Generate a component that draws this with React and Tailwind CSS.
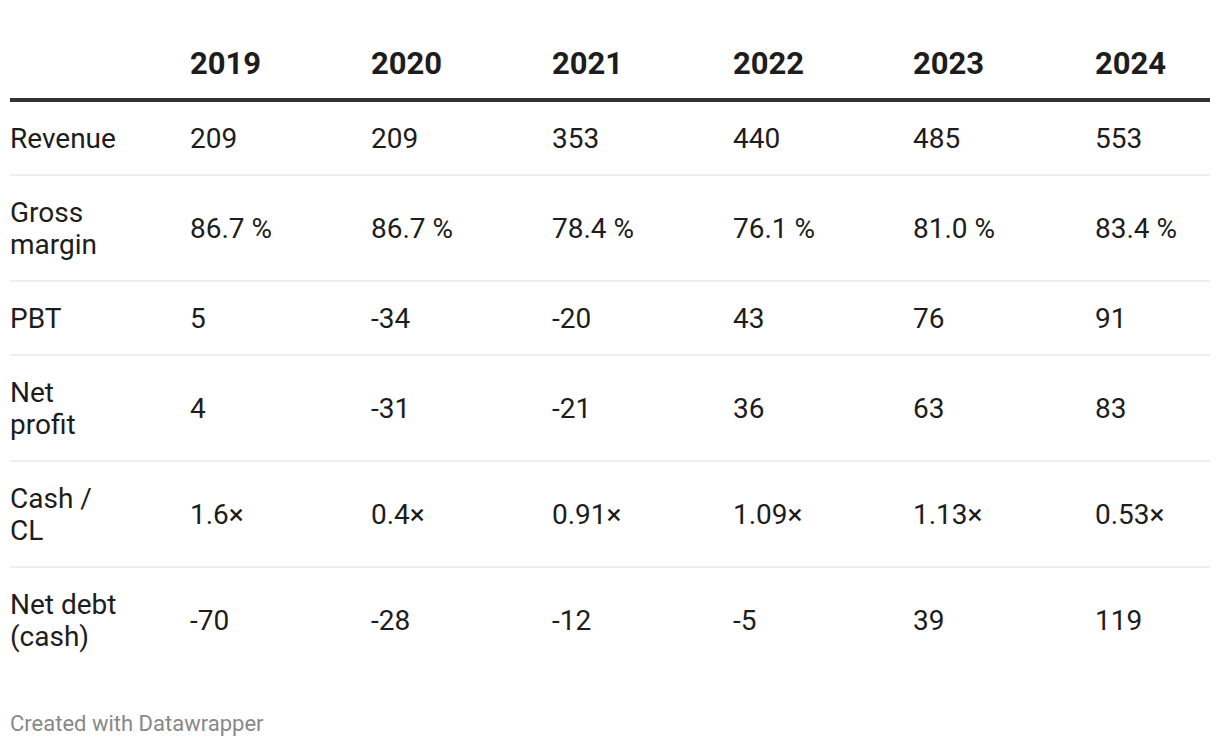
const years = ["2019", "2020", "2021", "2022", "2023", "2024"]

const rows = [
  { label: ["Revenue"], values: ["209", "209", "353", "440", "485", "553"] },
  { label: ["Gross", "margin"], values: ["86.7 %", "86.7 %", "78.4 %", "76.1 %", "81.0 %", "83.4 %"] },
  { label: ["PBT"], values: ["5", "-34", "-20", "43", "76", "91"] },
  { label: ["Net", "profit"], values: ["4", "-31", "-21", "36", "63", "83"] },
  { label: ["Cash /", "CL"], values: ["1.6×", "0.4×", "0.91×", "1.09×", "1.13×", "0.53×"] },
  { label: ["Net debt", "(cash)"], values: ["-70", "-28", "-12", "-5", "39", "119"] },
]

const cols = "grid grid-cols-[180px_181px_181px_181px_180px_182px_1fr]"

export default function App() {
  return (
    <div className="w-[1220px] h-[748px] bg-white px-[10px] font-['Roboto','Liberation_Sans',sans-serif] text-[#1d1d1d]">
      {/* Header */}
      <div className={`${cols} pt-[46px] pb-[16px] border-b-4 border-[#333333]`}>
        <div />
        {years.map(y => (
          <div key={y} className="text-[31px] leading-[36px] font-bold">
            {y}
          </div>
        ))}
      </div>

      {/* Body */}
      {rows.map((row, i) => (
        <div
          key={row.label.join(" ")}
          className={`${cols} items-center pt-[21px] pb-[19px] text-[28px] leading-[32px] ${
            i < rows.length - 1 ? "border-b-2 border-[#eeeeee]" : ""
          }`}
        >
          <div>
            {row.label.map(l => (
              <div key={l}>{l}</div>
            ))}
          </div>
          {row.values.map((v, j) => (
            <div key={j}>{v}</div>
          ))}
        </div>
      ))}

      {/* Footer */}
      <div className="mt-[38px] text-[22px] leading-[28px] text-[#888888]">Created with Datawrapper</div>
    </div>
  )
}
